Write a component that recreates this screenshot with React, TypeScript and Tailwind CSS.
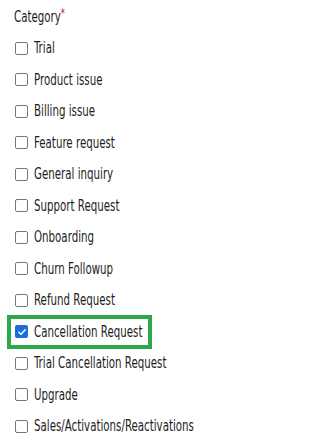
import React from 'react';

const OPTIONS = [
  'Trial',
  'Product issue',
  'Billing issue',
  'Feature request',
  'General inquiry',
  'Support Request',
  'Onboarding',
  'Churn Followup',
  'Refund Request',
  'Cancellation Request',
  'Trial Cancellation Request',
  'Upgrade',
  'Sales/Activations/Reactivations',
];

const SELECTED = 'Cancellation Request';

const Box: React.FC<{ checked: boolean }> = ({ checked }) =>
  checked ? (
    <span className="flex h-[13px] w-[13px] shrink-0 items-center justify-center rounded-[2px] bg-[#1a6fdc]">
      <svg viewBox="0 0 12 12" className="h-[10px] w-[10px]">
        <path d="M2.2 6.2 L4.8 8.7 L9.8 3.3" fill="none" stroke="#fff" strokeWidth={1.8} strokeLinecap="round" strokeLinejoin="round" />
      </svg>
    </span>
  ) : (
    <span className="h-[13px] w-[13px] shrink-0 rounded-[2px] border border-[#767676] bg-white" />
  );

export default function App() {
  return (
    <div className="h-[446px] w-[303px] bg-white pl-[14px] pt-px text-[15px] text-[#1d1d1d]" style={{ fontFamily: '"DejaVu Sans Condensed", sans-serif' }}>
      <div className="flex h-[31.5px] items-center">
        <span className="origin-left scale-x-[0.76] whitespace-nowrap">
          Category<span className="relative -top-[5px] text-[12px] text-[#c0262d]">*</span>
        </span>
      </div>
      {OPTIONS.map(o => (
        <label key={o} className="relative flex h-[31.5px] items-center gap-[6px] pl-px">
          <Box checked={o === SELECTED} />
          <span className="origin-left scale-x-[0.76] whitespace-nowrap">{o}</span>
          {o === SELECTED && (
            <span className="pointer-events-none absolute left-[-7px] top-[-1px] h-[34px] w-[145px] border-4 border-[#2ea84a]" />
          )}
        </label>
      ))}
    </div>
  );
}
